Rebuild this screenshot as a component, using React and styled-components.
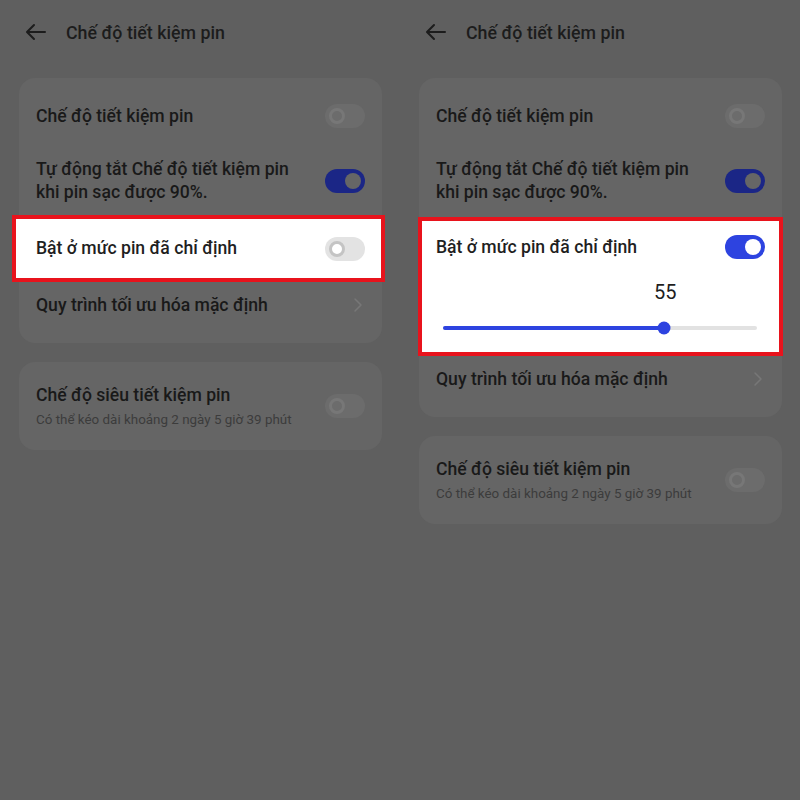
import React from "react";
import styled, { createGlobalStyle } from "styled-components";

const GlobalStyle = createGlobalStyle`
  html, body {
    margin: 0;
    padding: 0;
    background: #5f5f5f;
  }
  body {
    font-family: Roboto, "Noto Sans", "Liberation Sans", sans-serif;
  }
`;

const screens = [
  { key: "left", expanded: false, hl: { left: 7, right: 3 } },
  { key: "right", expanded: true, hl: { left: 1, right: 1 } },
];

const SLIDER = { min: 5, max: 76, value: 55 };

const App = () => {
  return (
    <>
      <GlobalStyle />
      <Page>
        {screens.map((s) => (
          <Screen key={s.key}>
            <Header>
              <BackArrow viewBox="0 0 24 24">
                <path d="M21 12H3.5M10 5l-7 7 7 7" />
              </BackArrow>
              <HeaderTitle>Chế độ tiết kiệm pin</HeaderTitle>
            </Header>

            <Card $pb={15}>
              <Row $h={60}>
                <RowTitle>Chế độ tiết kiệm pin</RowTitle>
                <Toggle $state="dimOff" />
              </Row>
              <Row $h={69}>
                <RowTitle>
                  Tự động tắt Chế độ tiết kiệm pin
                  <br />
                  khi pin sạc được 90%.
                </RowTitle>
                <Toggle $state="dimOn" />
              </Row>

              <Highlight $left={s.hl.left} $right={s.hl.right} $expanded={s.expanded}>
                <HighlightHead $expanded={s.expanded}>
                  <RowTitle $light>Bật ở mức pin đã chỉ định</RowTitle>
                  <Toggle $state={s.expanded ? "on" : "off"} />
                </HighlightHead>
                {s.expanded && <LevelSlider {...SLIDER} />}
              </Highlight>

              <Row $h={46}>
                <RowTitle>Quy trình tối ưu hóa mặc định</RowTitle>
                <Chevron viewBox="0 0 10 16">
                  <path d="M2 2l6 6-6 6" />
                </Chevron>
              </Row>
            </Card>

            <Card $mt={19}>
              <Row $h={88}>
                <TextStack>
                  <RowTitle>Chế độ siêu tiết kiệm pin</RowTitle>
                  <RowSub>Có thể kéo dài khoảng 2 ngày 5 giờ 39 phút</RowSub>
                </TextStack>
                <Toggle $state="dimOff" />
              </Row>
            </Card>
          </Screen>
        ))}
      </Page>
    </>
  );
};

const LevelSlider = ({ min, max, value }) => {
  const pct = ((value - min) / (max - min)) * 100;
  return (
    <SliderBox>
      <ValueLine>
        <ValueLabel style={{ left: `${pct}%` }}>{value}</ValueLabel>
      </ValueLine>
      <Track>
        <Fill style={{ width: `${pct}%` }} />
        <Thumb style={{ left: `${pct}%` }} />
      </Track>
    </SliderBox>
  );
};

export default App;

// Styled Components
const Page = styled.div`
  display: grid;
  grid-template-columns: 400px 400px;
  width: 800px;
  height: 800px;
  background: #5f5f5f;
  overflow: hidden;
`;

const Screen = styled.div`
  display: flex;
  flex-direction: column;
  padding: 0 18px 0 19px;
`;

const Header = styled.div`
  display: flex;
  align-items: center;
  height: 64px;
  gap: 18px;
  padding-left: 5px;
  margin-bottom: 14px;
`;

const BackArrow = styled.svg`
  width: 24px;
  height: 24px;
  fill: none;
  stroke: #1c1c1c;
  stroke-width: 2;
  stroke-linecap: round;
  stroke-linejoin: round;
`;

const HeaderTitle = styled.div`
  font-size: 17.8px;
  font-weight: 500;
  color: #1c1c1c;
`;

const Card = styled.div`
  display: flex;
  flex-direction: column;
  background: #656565;
  border-radius: 16px;
  padding: 8px 0 ${(p) => p.$pb || 0}px;
  margin-top: ${(p) => p.$mt || 0}px;
  ${(p) => (p.$mt ? "padding-top: 0;" : "")}
`;

const Row = styled.div`
  display: flex;
  align-items: center;
  justify-content: space-between;
  height: ${(p) => p.$h}px;
  padding: 0 17px;
  box-sizing: border-box;
`;

const TextStack = styled.div`
  display: flex;
  flex-direction: column;
  gap: 4px;
`;

const RowTitle = styled.div`
  font-size: 17.6px;
  font-weight: 500;
  line-height: 23px;
  color: ${(p) => (p.$light ? "#1f1f1f" : "#191919")};
`;

const RowSub = styled.div`
  font-size: 13.4px;
  line-height: 18px;
  color: #3c3c3c;
`;

const Highlight = styled.div`
  display: flex;
  flex-direction: column;
  background: #ffffff;
  border: 4px solid #e8131c;
  margin: ${(p) => (p.$expanded ? "2px" : "0")} -${(p) => p.$right}px 0 -${(p) => p.$left}px;
  padding: 0 ${(p) => 17 + p.$right - 4}px 0 ${(p) => 17 + p.$left - 4}px;
  height: ${(p) => (p.$expanded ? 139 : 67)}px;
  box-sizing: border-box;
`;

const HighlightHead = styled.div`
  display: flex;
  align-items: center;
  justify-content: space-between;
  height: ${(p) => (p.$expanded ? 52 : 59)}px;
`;

const toggleColors = {
  off: { track: "#e3e3e3", knob: "#ffffff", ring: "#c4c4c4" },
  on: { track: "#2d43e0", knob: "#ffffff", ring: "#ffffff" },
  dimOff: { track: "#6c6c6c", knob: "#6c6c6c", ring: "#777777" },
  dimOn: { track: "#1b2686", knob: "#666666", ring: "#666666" },
};

const Toggle = styled.div`
  position: relative;
  flex: none;
  width: 40px;
  height: 24px;
  border-radius: 12px;
  background: ${(p) => toggleColors[p.$state].track};

  &::after {
    content: "";
    position: absolute;
    top: 4px;
    left: ${(p) => (p.$state === "on" || p.$state === "dimOn" ? "20px" : "4px")};
    width: 16px;
    height: 16px;
    border-radius: 50%;
    box-sizing: border-box;
    background: ${(p) => toggleColors[p.$state].knob};
    border: ${(p) =>
      p.$state === "off" || p.$state === "dimOff"
        ? `3px solid ${toggleColors[p.$state].ring}`
        : "none"};
  }
`;

const Chevron = styled.svg`
  width: 10px;
  height: 16px;
  margin-right: 2px;
  fill: none;
  stroke: #777777;
  stroke-width: 1.5;
  stroke-linecap: round;
  stroke-linejoin: round;
`;

const SliderBox = styled.div`
  display: flex;
  flex-direction: column;
  padding: 0 8px 0 7px;
`;

const ValueLine = styled.div`
  position: relative;
  height: 28px;
  margin-top: 5px;
`;

const ValueLabel = styled.span`
  position: absolute;
  top: 0;
  transform: translateX(-45%);
  font-size: 20px;
  color: #1e1e1e;
  line-height: 28px;
`;

const Track = styled.div`
  position: relative;
  height: 4px;
  margin-top: 20px;
  border-radius: 2px;
  background: #e2e2e2;
`;

const Fill = styled.div`
  height: 100%;
  border-radius: 2px;
  background: #2d43e0;
`;

const Thumb = styled.div`
  position: absolute;
  top: 50%;
  width: 13px;
  height: 13px;
  border-radius: 50%;
  background: #2d43e0;
  transform: translate(-50%, -50%);
`;
